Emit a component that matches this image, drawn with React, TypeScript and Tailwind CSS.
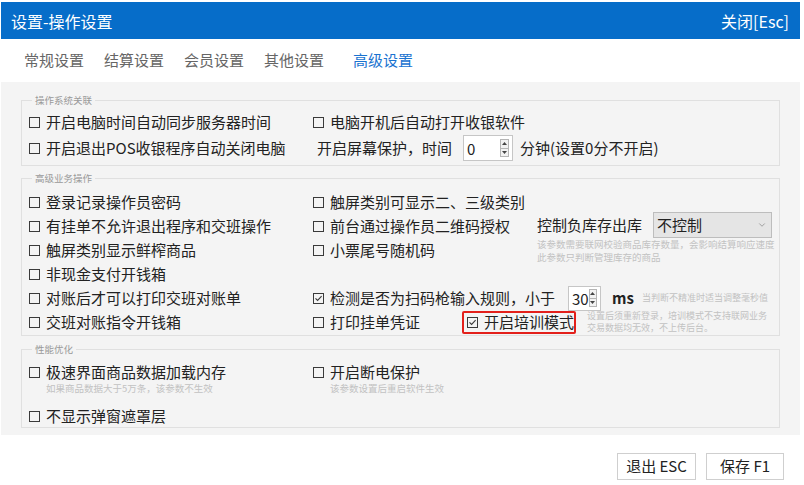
import { ChevronDown } from "lucide-react";

function Box({ checked }: { checked?: boolean }) {
  return (
    <svg width="11" height="11" viewBox="0 0 11 11" className="shrink-0">
      <rect x="0.5" y="0.5" width="10" height="10" fill="none" stroke="#3a3a3a" />
      {checked && <path d="M2.5 5.3 L4.6 7.4 L8.6 3.2" fill="none" stroke="#3a3a3a" strokeWidth="1.1" />}
    </svg>
  );
}

function Check({ label, checked, className = "" }: { label: string; checked?: boolean; className?: string }) {
  return (
    <div className={`flex items-center gap-[6px] h-6 whitespace-nowrap ${className}`}>
      <Box checked={checked} />
      <span>{label}</span>
    </div>
  );
}

function Spin({ value, w, h }: { value: string; w: string; h: string }) {
  return (
    <div className={`flex items-center justify-between bg-white border border-[#c6c6c6] pl-[3px] pr-[3px] ${w} ${h}`}>
      <span className="leading-none">{value}</span>
      <div className="flex flex-col w-[9px] h-[18px] border border-[#b5b5b5]">
        <div className="flex-1 flex items-center justify-center bg-[#f2f2f2] border-b border-[#b5b5b5]">
          <svg width="5" height="3" viewBox="0 0 5 3"><path d="M0 3 L2.5 0 L5 3 Z" fill="#444" /></svg>
        </div>
        <div className="flex-1 flex items-center justify-center bg-[#f2f2f2]">
          <svg width="5" height="3" viewBox="0 0 5 3"><path d="M0 0 L2.5 3 L5 0 Z" fill="#444" /></svg>
        </div>
      </div>
    </div>
  );
}

function Group({ title, className = "", children }: { title: string; className?: string; children: React.ReactNode }) {
  return (
    <fieldset className={`border border-[#e0e0e0] pl-[7px] ${className}`}>
      <legend className="ml-[3px] px-[3px] text-[9.5px] leading-[14px] text-[#999]">{title}</legend>
      {children}
    </fieldset>
  );
}

const tabs = ["常规设置", "结算设置", "会员设置", "其他设置"];

export default function App() {
  return (
    <div className="min-h-screen bg-white text-[#222] font-['Microsoft_YaHei','Noto_Sans_CJK_SC',sans-serif]">
      <div className="ml-[1px] w-[799px] pt-[2px]">
        <header className="h-[37px] bg-[#066dc9] flex items-center justify-between pl-[10px] pr-[11px] text-white text-[16px]">
          <span>设置-操作设置</span>
          <span>关闭[Esc]</span>
        </header>

        <nav className="h-[43px] flex items-center gap-[20px] pl-[23px] text-[15px] text-[#666]">
          {tabs.map((t) => (
            <span key={t}>{t}</span>
          ))}
          <span className="ml-[9px] text-[#1a73d0]">高级设置</span>
        </nav>

        <main className="bg-[#f4f4f4] px-[20px] pt-[11px] pb-[7px] text-[15px]">
          <Group title="操作系统关联" className="pb-[4px]">
            <div className="pt-[3px] grid grid-cols-[284px_1fr] gap-y-[1px]">
              <Check label="开启电脑时间自动同步服务器时间" />
              <Check label="电脑开机后自动打开收银软件" />
              <Check label="开启退出POS收银程序自动关闭电脑" className="h-[26px]" />
              <div className="flex items-center h-[26px] pl-[4px] whitespace-nowrap">
                <span>开启屏幕保护，时间</span>
                <Spin value="0" w="w-[50px] ml-[11px]" h="h-[26px]" />
                <span className="ml-[7px]">分钟(设置0分不开启)</span>
              </div>
            </div>
          </Group>

          <Group title="高级业务操作" className="mt-[5px] pb-[1px]">
            <div className="pt-[5px] grid grid-cols-[284px_1fr]">
              <div className="flex flex-col">
                <Check label="登录记录操作员密码" />
                <Check label="有挂单不允许退出程序和交班操作" />
                <Check label="触屏类别显示鲜榨商品" />
                <Check label="非现金支付开钱箱" />
                <Check label="对账后才可以打印交班对账单" />
                <Check label="交班对账指令开钱箱" />
              </div>
              <div className="flex flex-col">
                <div className="flex h-[96px]">
                  <div className="w-[224px] flex flex-col">
                    <Check label="触屏类别可显示二、三级类别" />
                    <Check label="前台通过操作员二维码授权" />
                    <Check label="小票尾号随机码" />
                  </div>
                  <div className="pt-[22px]">
                    <div className="flex items-center h-[26px] whitespace-nowrap">
                      <span>控制负库存出库</span>
                      <div className="ml-[11px] w-[119px] h-[26px] bg-[#e5e5e5] border border-[#bdbdbd] flex items-center justify-between pl-[3px] pr-[4px]">
                        <span>不控制</span>
                        <ChevronDown size={10} color="#777" strokeWidth={1.5} />
                      </div>
                    </div>
                    <p className="text-[9.5px] leading-[13px] text-[#c2c2c2] whitespace-nowrap">
                      该参数需要联网校验商品库存数量，会影响结算响应速度
                      <br />
                      此参数只判断管理库存的商品
                    </p>
                  </div>
                </div>
                <div className="flex items-center h-6 whitespace-nowrap">
                  <Check label="检测是否为扫码枪输入规则，小于" checked />
                  <Spin value="30" w="w-[33px] ml-[13px]" h="h-[25px]" />
                  <span className="ml-[11px] font-semibold">ms</span>
                  <span className="ml-[8px] text-[9px] text-[#c2c2c2]">当判断不精准时适当调整毫秒值</span>
                </div>
                <div className="flex items-center h-6 whitespace-nowrap">
                  <Check label="打印挂单凭证" className="w-[149px]" />
                  <div className="h-[23px] w-[114px] border-2 border-[#e3201b] rounded-[2px] pl-[3px] flex items-center">
                    <Check label="开启培训模式" checked />
                  </div>
                  <p className="ml-[11px] text-[9px] leading-[12px] text-[#c2c2c2]">
                    设置后须重新登录，培训模式不支持联网业务
                    <br />
                    交易数据均无效，不上传后台。
                  </p>
                </div>
              </div>
            </div>
          </Group>

          <Group title="性能优化" className="mt-[6px] pb-[1px]">
            <div className="pt-[6px] grid grid-cols-[284px_1fr]">
              <div>
                <Check label="极速界面商品数据加载内存" className="h-[20px]" />
                <div className="pl-[17px] text-[9.5px] leading-[12px] text-[#c2c2c2]">如果商品数据大于5万条，该参数不生效</div>
              </div>
              <div>
                <Check label="开启断电保护" className="h-[20px]" />
                <div className="pl-[17px] text-[9.5px] leading-[12px] text-[#c2c2c2]">该参数设置后重启软件生效</div>
              </div>
              <Check label="不显示弹窗遮罩层" className="h-[20px] mt-[12px]" />
            </div>
          </Group>
        </main>

        <footer className="flex justify-end gap-[10px] pt-[18px] pr-[16px] text-[15px]">
          <button className="w-[79px] h-[27px] bg-white border border-[#cfcfcf]">退出 ESC</button>
          <button className="w-[78px] h-[27px] bg-white border border-[#cfcfcf]">保存 F1</button>
        </footer>
      </div>
    </div>
  );
}
